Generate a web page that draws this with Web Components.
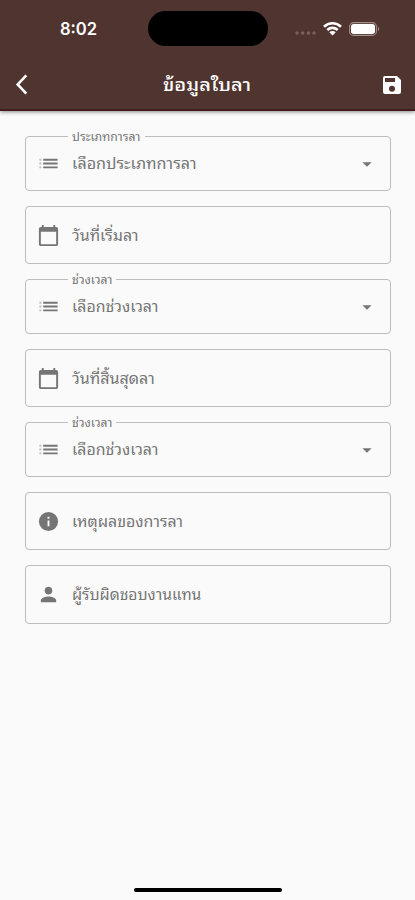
<!DOCTYPE html>
<html lang="th">
<head>
<meta charset="utf-8">
<meta name="viewport" content="width=device-width">
<title>ข้อมูลใบลา</title>
<style>
html,body{margin:0;height:100%;background:#fafafa}
body{font-family:"Noto Sans Thai Looped",Loma,"Noto Looped Thai",Garuda,Waree,Laksaman,Norasi,"Liberation Sans",sans-serif;overflow:hidden}
</style>
</head>
<body>
<leave-screen></leave-screen>
<script>
const define = (name, html, ready) => customElements.define(name, class extends HTMLElement {
  connectedCallback() {
    if (this.shadowRoot) return;
    const t = document.createElement('template');
    t.innerHTML = html;
    this.attachShadow({mode: 'open'}).append(t.content.cloneNode(true));
    if (ready) ready(this, this.shadowRoot);
  }
});

const ICONS = {
  list: '<path opacity=".45" d="M2.500 7h2v2h-2zm0 4h2v2h-2zm0 4h2v2h-2z"/><path d="M6.500 7h15v2h-15zm0 4h15v2h-15zm0 4h15v2h-15z"/>',
  calendar: '<path d="M20 3h-1V1h-2v2H7V1H5v2H4c-1.100 0-2 .9-2 2v16c0 1.100.9 2 2 2h16c1.100 0 2-.9 2-2V5c0-1.100-.9-2-2-2zm0 18H4V8h16v13z"/>',
  info: '<path d="M12 2a10 10 0 1 0 0 20 10 10 0 0 0 0-20zm1 15h-2v-6h2v6zm0-8h-2V7h2v2z"/>',
  person: '<path d="M12 12c2.210 0 4-1.790 4-4s-1.790-4-4-4-4 1.790-4 4 1.790 4 4 4zm0 2c-2.670 0-8 1.340-8 4v2h16v-2c0-2.660-5.330-4-8-4z"/>',
  down: '<path d="M7 10l5 5 5-5z"/>',
  back: '<path fill="none" stroke="currentColor" stroke-width="2.700" d="M17 2.500 8 12l9 9.500"/>',
  save: '<path fill-rule="evenodd" d="M17 3H5a2 2 0 0 0-2 2v14a2 2 0 0 0 2 2h14a2 2 0 0 0 2-2V7zM12 18.700a3 3 0 1 1 0-6 3 3 0 0 1 0 6zM15 9H5V5h10z"/>'
};
define('ui-icon', '<style>:host{display:block;width:23px;height:23px;flex:none}svg{display:block;width:100%;height:100%;fill:currentColor}</style><svg viewBox="0 0 24 24"></svg>',
  (el, root) => root.querySelector('svg').innerHTML = ICONS[el.getAttribute('name')]);

/* One line of text, condensed or widened to the width given in its attribute. */
define('fit-text', '<style>:host{display:block;white-space:nowrap}span{display:inline-block;transform-origin:0 50%}</style><span><slot></slot></span>',
  (el, root) => {
    const w = +el.getAttribute('width'), s = root.querySelector('span');
    el.style.width = w + 'px';
    s.style.transform = `scaleX(${w / s.offsetWidth})`;
  });

define('status-bar', `<style>
:host{display:grid;grid-template-columns:148px 120px 1fr;height:58px;align-items:center}
.time{padding-left:60px;font:600 17px/20px Inter,sans-serif}
.island{height:35px;border-radius:18px;background:#000;margin-bottom:1px}
.right{display:flex;align-items:center;padding-left:27px;margin-top:-1px}
.dots{width:21px;height:4px;margin:9px 7px 0 0}
.wifi{width:19px;height:15px;margin-right:7px}.bat{width:31px;height:14px}
svg{display:block}
</style>
<div class="time"><fit-text width="37">8:02</fit-text></div><div class="island"></div>
<div class="right">
<svg class="dots" viewBox="0 0 21 4" fill="#7b625d"><circle cx="2" cy="2" r="1.700"/><circle cx="7.700" cy="2" r="1.700"/><circle cx="13.400" cy="2" r="1.700"/><circle cx="19" cy="2" r="1.700"/></svg>
<svg class="wifi" viewBox="0 0 19 15" fill="none" stroke="#fff" stroke-width="2.600"><path d="M1 5.700a12.200 12.200 0 0 1 17 0M4.300 9a7.500 7.500 0 0 1 10.400 0"/><path fill="#fff" stroke="none" d="M9.500 14.600 6.300 11.300a4.600 4.600 0 0 1 6.400 0z"/></svg>
<svg class="bat" viewBox="0 0 31 14"><rect x=".6" y=".6" width="26.800" height="12.800" rx="4" fill="none" stroke="#a0908c" stroke-width="1.100"/><rect x="2" y="2" width="24" height="10" rx="2.700" fill="#fff"/><path d="M29 4.800a2.600 2.600 0 0 1 0 4.400z" fill="#a0908c"/></svg>
</div>`);

define('app-bar', `<style>
:host{display:grid;grid-template-columns:1fr auto 1fr;align-items:center;height:53px;padding:0 12px 0 10px}
fit-text{font-size:18px;font-weight:500;line-height:30px;margin-bottom:3px}
ui-icon:last-child{justify-self:end;width:24px;height:24px;margin-right:-1px}
</style><ui-icon name="back"></ui-icon><fit-text width="88"><slot></slot></fit-text><ui-icon name="save"></ui-icon>`);

define('form-field', `<style>
:host{display:block}
fieldset{box-sizing:border-box;height:100%;min-width:0;margin:0;padding:0 12px 0 11px;border:1px solid #bdbdbd;border-radius:4px;position:relative;display:flex;align-items:center;color:#757575}
.value{margin:0 0 3px 12px;font-size:15.500px;line-height:26px;flex:1}
.label{position:absolute;left:42px;top:-10px;padding:0 4px;background:#fafafa;font-size:11.500px;line-height:18px}
.arrow{width:22px;height:22px}
</style><fieldset></fieldset>`, (el, root) => {
  const a = n => el.getAttribute(n), f = root.querySelector('fieldset');
  el.style.height = a('height') + 'px';
  f.innerHTML = (a('label') ? `<div class="label"><fit-text width="${a('label-width')}">${a('label')}</fit-text></div>` : '')
    + `<ui-icon name="${a('icon')}"></ui-icon><div class="value"><fit-text width="${a('text-width')}">${a('value')}</fit-text></div>`
    + (a('label') ? '<ui-icon class="arrow" name="down"></ui-icon>' : '');
});

define('leave-screen', `<style>
:host{display:flex;flex-direction:column;height:900px;width:415px;background:#fafafa}
header{height:111px;flex:none;box-sizing:border-box;background:#50342f;color:#fff;border-bottom:2px solid #451b1e;box-shadow:0 1px 4px #0007}
main{flex:1;padding:25px 24px 0 25px;display:flex;flex-direction:column;gap:15px}
footer{height:5px;flex:none;display:flex;justify-content:center;padding-bottom:7px}
i{width:148px;height:4px;border-radius:2px;background:#000}
</style>
<header><status-bar></status-bar><app-bar>ข้อมูลใบลา</app-bar></header>
<main>
<form-field height="55" icon="list" label="ประเภทการลา" label-width="69" value="เลือกประเภทการลา" text-width="125"></form-field>
<form-field height="58" icon="calendar" value="วันที่เริ่มลา" text-width="67"></form-field>
<form-field height="55" icon="list" label="ช่วงเวลา" label-width="40" value="เลือกช่วงเวลา" text-width="86"></form-field>
<form-field height="58" icon="calendar" value="วันที่สิ้นสุดลา" text-width="83"></form-field>
<form-field height="55" icon="list" label="ช่วงเวลา" label-width="40" value="เลือกช่วงเวลา" text-width="86"></form-field>
<form-field height="58" icon="info" value="เหตุผลของการลา" text-width="111"></form-field>
<form-field height="59" icon="person" value="ผู้รับผิดชอบงานแทน" text-width="129"></form-field>
</main><footer><i></i></footer>`);
</script>
</body>
</html>
